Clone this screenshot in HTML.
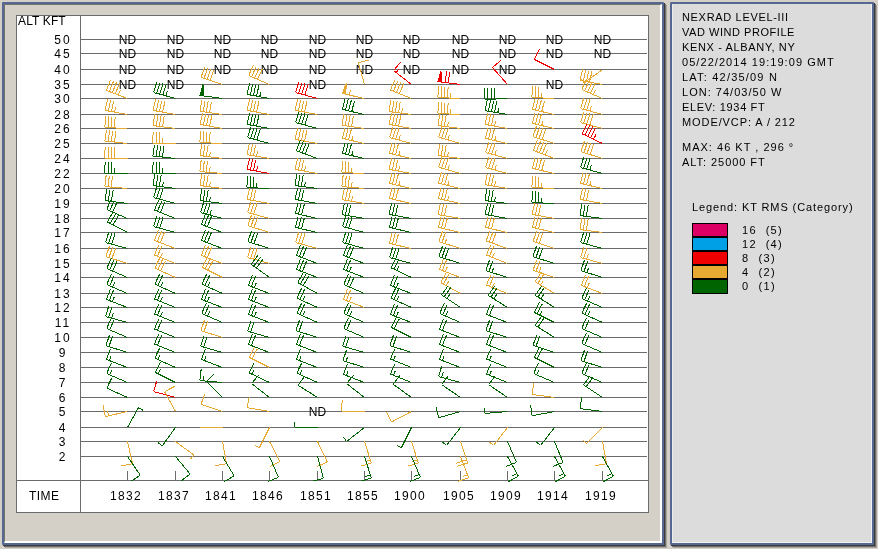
<!DOCTYPE html>
<html><head><meta charset="utf-8">
<style>
html,body{margin:0;padding:0;}
body{width:878px;height:549px;overflow:hidden;position:relative;background:#D4D0C8;font-family:"Liberation Sans",sans-serif;}
.yl,.tl,.nd,.alt,.time,.rt{will-change:transform;}
.abs{position:absolute;}
#lfsh{position:absolute;left:5px;top:5px;width:662px;height:543px;background:#A9A6A0;}
#lfsh2{position:absolute;left:4px;top:4px;width:662px;height:543px;background:#6E6C68;}
#lfsh3{position:absolute;left:3px;top:3px;width:662px;height:543px;background:#3C3C3C;}
#lf{position:absolute;left:2px;top:2px;width:662px;height:543px;box-sizing:border-box;border:2px solid #566792;background:#D4D0C8;border-radius:1px;}
#lfin{position:absolute;left:0;top:0;right:0;bottom:0;border-top:1px solid #727272;border-left:1px solid #727272;border-right:2px solid #fff;border-bottom:2px solid #fff;}
#rpsh{position:absolute;left:673px;top:5px;width:204px;height:543px;background:#A9A6A0;}
#rpsh2{position:absolute;left:672px;top:4px;width:204px;height:543px;background:#6E6C68;}
#rpsh3{position:absolute;left:671px;top:3px;width:204px;height:543px;background:#3C3C3C;}
#rp{position:absolute;left:670px;top:2px;width:204px;height:543px;box-sizing:border-box;border:2px solid #566792;background:#DCDCDC;border-radius:1px;}
#rpin{position:absolute;left:0;top:0;right:0;bottom:0;border-left:1px solid #ECECEC;border-right:1px solid #F2F2F2;border-bottom:1px solid #F2F2F2;}
#chart{position:absolute;left:16px;top:15px;width:633px;height:498px;box-sizing:border-box;border:1px solid #6B6B6B;background:#fff;}
svg{position:absolute;left:0;top:0;}
.yl{position:absolute;left:37px;width:50px;box-sizing:border-box;padding-left:2px;text-align:center;font-size:12px;line-height:14px;letter-spacing:2px;color:#000;}
.tl{position:absolute;top:489px;width:54px;text-align:center;font-size:12px;line-height:14px;letter-spacing:1.3px;color:#000;}
.nd{position:absolute;width:41px;text-align:center;font-size:12px;line-height:14px;color:#000;}
.alt{position:absolute;left:18px;top:14px;font-size:12px;line-height:14px;letter-spacing:0.13px;}
.time{position:absolute;left:29px;top:489px;font-size:12px;line-height:14px;letter-spacing:0.45px;}
.rt{position:absolute;left:682px;font-size:11px;line-height:15px;color:#000;white-space:pre;}
.sw{position:absolute;left:692px;width:36px;height:14px;box-sizing:border-box;border:1px solid #000;}
</style></head><body>
<div id="lfsh"></div><div id="lfsh2"></div><div id="lfsh3"></div>
<div id="lf"><div id="lfin"></div></div>
<div id="rpsh"></div><div id="rpsh2"></div><div id="rpsh3"></div>
<div id="rp"><div id="rpin"></div></div>
<div id="chart"></div>
<svg width="878" height="549" viewBox="0 0 878 549" shape-rendering="crispEdges">
<g fill="#6B6B6B">
<rect x="81" y="39" width="566" height="1"/>
<rect x="81" y="53" width="566" height="1"/>
<rect x="81" y="69" width="566" height="1"/>
<rect x="81" y="84" width="566" height="1"/>
<rect x="81" y="98" width="566" height="1"/>
<rect x="81" y="114" width="566" height="1"/>
<rect x="81" y="128" width="566" height="1"/>
<rect x="81" y="143" width="566" height="1"/>
<rect x="81" y="158" width="566" height="1"/>
<rect x="81" y="173" width="566" height="1"/>
<rect x="81" y="188" width="566" height="1"/>
<rect x="81" y="203" width="566" height="1"/>
<rect x="81" y="218" width="566" height="1"/>
<rect x="81" y="232" width="566" height="1"/>
<rect x="81" y="248" width="566" height="1"/>
<rect x="81" y="263" width="566" height="1"/>
<rect x="81" y="277" width="566" height="1"/>
<rect x="81" y="293" width="566" height="1"/>
<rect x="81" y="307" width="566" height="1"/>
<rect x="81" y="322" width="566" height="1"/>
<rect x="81" y="337" width="566" height="1"/>
<rect x="81" y="352" width="566" height="1"/>
<rect x="81" y="367" width="566" height="1"/>
<rect x="81" y="382" width="566" height="1"/>
<rect x="81" y="397" width="566" height="1"/>
<rect x="81" y="411" width="566" height="1"/>
<rect x="81" y="427" width="566" height="1"/>
<rect x="81" y="441" width="566" height="1"/>
<rect x="81" y="456" width="566" height="1"/>
<rect x="17" y="480" width="631" height="1"/>
<rect x="80" y="16" width="1" height="496"/>
<rect x="127" y="471" width="1" height="9"/>
<rect x="175" y="471" width="1" height="9"/>
<rect x="222" y="471" width="1" height="9"/>
<rect x="269" y="471" width="1" height="9"/>
<rect x="317" y="471" width="1" height="9"/>
<rect x="364" y="471" width="1" height="9"/>
<rect x="411" y="471" width="1" height="9"/>
<rect x="460" y="471" width="1" height="9"/>
<rect x="507" y="471" width="1" height="9"/>
<rect x="554" y="471" width="1" height="9"/>
<rect x="602" y="471" width="1" height="9"/>
</g>
</svg>
<div class="alt">ALT KFT</div>
<div class="yl" style="top:33px">50</div>
<div class="yl" style="top:47px">45</div>
<div class="yl" style="top:63px">40</div>
<div class="yl" style="top:78px">35</div>
<div class="yl" style="top:92px">30</div>
<div class="yl" style="top:108px">28</div>
<div class="yl" style="top:122px">26</div>
<div class="yl" style="top:137px">25</div>
<div class="yl" style="top:152px">24</div>
<div class="yl" style="top:167px">22</div>
<div class="yl" style="top:182px">20</div>
<div class="yl" style="top:197px">19</div>
<div class="yl" style="top:212px">18</div>
<div class="yl" style="top:226px">17</div>
<div class="yl" style="top:242px">16</div>
<div class="yl" style="top:257px">15</div>
<div class="yl" style="top:271px">14</div>
<div class="yl" style="top:287px">13</div>
<div class="yl" style="top:301px">12</div>
<div class="yl" style="top:316px">11</div>
<div class="yl" style="top:331px">10</div>
<div class="yl" style="top:346px">9</div>
<div class="yl" style="top:361px">8</div>
<div class="yl" style="top:376px">7</div>
<div class="yl" style="top:391px">6</div>
<div class="yl" style="top:405px">5</div>
<div class="yl" style="top:421px">4</div>
<div class="yl" style="top:435px">3</div>
<div class="yl" style="top:450px">2</div>
<div class="time">TIME</div>
<div class="tl" style="left:99px">1832</div>
<div class="tl" style="left:147px">1837</div>
<div class="tl" style="left:194px">1841</div>
<div class="tl" style="left:241px">1846</div>
<div class="tl" style="left:289px">1851</div>
<div class="tl" style="left:336px">1855</div>
<div class="tl" style="left:383px">1900</div>
<div class="tl" style="left:432px">1905</div>
<div class="tl" style="left:479px">1909</div>
<div class="tl" style="left:526px">1914</div>
<div class="tl" style="left:574px">1919</div>
<div class="nd" style="left:107px;top:33px">ND</div>
<div class="nd" style="left:107px;top:47px">ND</div>
<div class="nd" style="left:107px;top:63px">ND</div>
<div class="nd" style="left:107px;top:78px">ND</div>
<div class="nd" style="left:155px;top:33px">ND</div>
<div class="nd" style="left:155px;top:47px">ND</div>
<div class="nd" style="left:155px;top:63px">ND</div>
<div class="nd" style="left:155px;top:78px">ND</div>
<div class="nd" style="left:202px;top:33px">ND</div>
<div class="nd" style="left:202px;top:47px">ND</div>
<div class="nd" style="left:202px;top:63px">ND</div>
<div class="nd" style="left:249px;top:33px">ND</div>
<div class="nd" style="left:249px;top:47px">ND</div>
<div class="nd" style="left:249px;top:63px">ND</div>
<div class="nd" style="left:297px;top:33px">ND</div>
<div class="nd" style="left:297px;top:47px">ND</div>
<div class="nd" style="left:297px;top:63px">ND</div>
<div class="nd" style="left:297px;top:78px">ND</div>
<div class="nd" style="left:297px;top:405px">ND</div>
<div class="nd" style="left:344px;top:33px">ND</div>
<div class="nd" style="left:344px;top:47px">ND</div>
<div class="nd" style="left:344px;top:63px">ND</div>
<div class="nd" style="left:391px;top:33px">ND</div>
<div class="nd" style="left:391px;top:47px">ND</div>
<div class="nd" style="left:391px;top:63px">ND</div>
<div class="nd" style="left:440px;top:33px">ND</div>
<div class="nd" style="left:440px;top:47px">ND</div>
<div class="nd" style="left:440px;top:63px">ND</div>
<div class="nd" style="left:487px;top:33px">ND</div>
<div class="nd" style="left:487px;top:47px">ND</div>
<div class="nd" style="left:487px;top:63px">ND</div>
<div class="nd" style="left:534px;top:33px">ND</div>
<div class="nd" style="left:534px;top:47px">ND</div>
<div class="nd" style="left:534px;top:78px">ND</div>
<div class="nd" style="left:582px;top:33px">ND</div>
<div class="nd" style="left:582px;top:47px">ND</div>
<svg width="878" height="549" viewBox="0 0 878 549" shape-rendering="crispEdges" fill="none" stroke-width="1">
<path d="M127.50 98.50L106.29 90.42M106.29 90.42L110.55 80.06M109.28 91.56L113.54 81.20M112.27 92.70L116.54 82.34M115.26 93.84L119.53 83.48M118.25 94.98L120.24 90.17" stroke="#E6AA32"/>
<path d="M127.50 114.50L105.17 110.44M105.17 110.44L107.46 99.47M108.31 111.01L110.61 100.05M111.46 111.58L113.76 100.62M114.61 112.16L115.69 107.07" stroke="#E6AA32"/>
<path d="M127.50 128.50L104.82 127.51M104.82 127.51L105.61 116.34M108.02 127.65L108.80 116.48M111.22 127.79L112.00 116.62M114.41 127.93L115.20 116.75" stroke="#E6AA32"/>
<path d="M127.50 143.50L104.93 141.05M104.93 141.05L106.44 129.95M108.11 141.39L109.62 130.29M111.30 141.74L112.80 130.64M114.48 142.08L115.99 130.98" stroke="#E6AA32"/>
<path d="M127.50 158.50L104.80 158.50M104.80 158.50L105.10 147.30M108.00 158.50L108.30 147.30M111.20 158.50L111.50 147.30M114.40 158.50L114.70 147.30" stroke="#E6AA32"/>
<path d="M127.50 173.50L104.80 173.50M104.80 173.50L105.10 162.30M108.00 173.50L108.30 162.30M111.20 173.50L111.50 162.30M114.40 173.50L114.55 168.30" stroke="#006400"/>
<path d="M127.50 188.50L104.89 186.53M104.89 186.53L106.15 175.40M108.07 186.81L109.34 175.68M111.26 187.09L112.53 175.96" stroke="#E6AA32"/>
<path d="M127.50 203.50L104.99 200.56M104.99 200.56L106.74 189.50M108.16 200.98L109.91 189.91M111.34 201.39L113.08 190.32" stroke="#006400"/>
<path d="M127.50 218.50L106.64 209.56M106.64 209.56L111.32 199.38M109.58 210.82L114.26 200.64M112.52 212.08L117.21 201.90" stroke="#006400"/>
<path d="M127.50 232.50L107.41 221.93M107.41 221.93L112.89 212.16M110.24 223.42L115.73 213.65M113.08 224.91L118.56 215.14" stroke="#006400"/>
<path d="M127.50 248.50L105.60 242.53M105.60 242.53L108.84 231.80M108.69 243.37L111.92 232.64M111.77 244.21L115.01 233.48" stroke="#006400"/>
<path d="M127.50 263.50L105.87 256.62M105.87 256.62L109.55 246.04M108.92 257.59L112.60 247.01M111.97 258.56L115.65 247.98" stroke="#E6AA32"/>
<path d="M127.50 277.50L106.64 268.56M106.64 268.56L111.32 258.38M109.58 269.82L114.26 259.64M112.52 271.08L117.21 260.90" stroke="#006400"/>
<path d="M127.50 293.50L106.64 284.56M106.64 284.56L111.32 274.38M109.58 285.82L114.26 275.64M112.52 287.08L114.70 282.36" stroke="#006400"/>
<path d="M127.50 307.50L106.29 299.42M106.29 299.42L110.55 289.06M109.28 300.56L113.54 290.20M112.27 301.70L114.26 296.89" stroke="#006400"/>
<path d="M127.50 322.50L105.60 316.53M105.60 316.53L108.84 305.80M108.69 317.37L111.92 306.64M111.77 318.21L113.29 313.23" stroke="#006400"/>
<path d="M127.50 337.50L106.64 328.56M106.64 328.56L111.32 318.38M109.58 329.82L114.26 319.64" stroke="#006400"/>
<path d="M127.50 352.50L105.87 345.62M105.87 345.62L109.55 335.04M108.92 346.59L112.60 336.01" stroke="#006400"/>
<path d="M127.50 367.50L106.29 359.42M106.29 359.42L110.55 349.06M109.28 360.56L111.27 355.75" stroke="#006400"/>
<path d="M127.50 382.50L106.64 373.56M106.64 373.56L111.32 363.38M109.58 374.82L111.76 370.10" stroke="#006400"/>
<path d="M127.50 397.50L106.80 388.18M106.80 388.18L111.67 378.09" stroke="#006400"/>
<path d="M127.50 411.50L105.36 416.53M105.36 416.53L103.17 405.54M108.48 415.82L107.48 410.72" stroke="#E6AA32"/>
<path d="M127.50 427.50L138.44 407.61M138.44 407.61L142.92 410.25" stroke="#006400"/>
<path d="M127.50 441.50L132.53 463.64M132.53 463.64L121.54 465.83" stroke="#E6AA32"/>
<path d="M127.50 456.50L140.32 475.23M140.32 475.23L130.91 481.31" stroke="#006400"/>
<path d="M175.50 98.50L153.60 92.53M153.60 92.53L156.84 81.80M156.69 93.37L159.92 82.64M159.77 94.21L163.01 83.48M162.86 95.05L166.10 84.33M165.95 95.90L167.46 90.92" stroke="#006400"/>
<path d="M175.50 114.50L153.17 110.44M153.17 110.44L155.46 99.47M156.31 111.01L158.61 100.05M159.46 111.58L161.76 100.62M162.61 112.16L164.91 101.19" stroke="#E6AA32"/>
<path d="M175.50 128.50L152.99 125.56M152.99 125.56L154.74 114.50M156.16 125.98L157.91 114.91M159.34 126.39L161.08 115.32M162.51 126.81L164.26 115.74" stroke="#E6AA32"/>
<path d="M175.50 143.50L152.80 143.50M152.80 143.50L153.10 132.30M156.00 143.50L156.30 132.30M159.20 143.50L159.50 132.30M162.40 143.50L162.55 138.30" stroke="#E6AA32"/>
<path d="M175.50 158.50L152.93 156.05M152.93 156.05L154.44 144.95M156.11 156.39L157.62 145.29M159.30 156.74L160.80 145.64M162.48 157.08L163.99 145.98" stroke="#006400"/>
<path d="M175.50 173.50L152.80 173.50M152.80 173.50L153.10 162.30M156.00 173.50L156.30 162.30M159.20 173.50L159.50 162.30M162.40 173.50L162.55 168.30" stroke="#006400"/>
<path d="M175.50 188.50L152.99 185.56M152.99 185.56L154.74 174.50M156.16 185.98L157.91 174.91M159.34 186.39L161.08 175.32M162.51 186.81L163.33 181.67" stroke="#006400"/>
<path d="M175.50 203.50L153.60 197.53M153.60 197.53L156.84 186.80M156.69 198.37L159.92 187.64M159.77 199.21L163.01 188.48" stroke="#006400"/>
<path d="M175.50 218.50L154.42 210.07M154.42 210.07L158.86 199.78M157.39 211.26L161.83 200.97M160.37 212.45L164.80 202.16" stroke="#006400"/>
<path d="M175.50 232.50L153.60 226.53M153.60 226.53L156.84 215.80M156.69 227.37L159.92 216.64M159.77 228.21L163.01 217.48" stroke="#006400"/>
<path d="M175.50 248.50L154.29 240.42M154.29 240.42L158.55 230.06M157.28 241.56L161.54 231.20M160.27 242.70L164.54 232.34" stroke="#E6AA32"/>
<path d="M175.50 263.50L154.42 255.07M154.42 255.07L158.86 244.78M157.39 256.26L161.83 245.97M160.37 257.45L162.44 252.67" stroke="#E6AA32"/>
<path d="M175.50 277.50L154.80 268.18M154.80 268.18L159.67 258.09M157.72 269.50L162.59 259.41M160.64 270.81L165.51 260.72" stroke="#E6AA32"/>
<path d="M175.50 293.50L154.80 284.18M154.80 284.18L159.67 274.09M157.72 285.50L162.59 275.41M160.64 286.81L162.91 282.13" stroke="#006400"/>
<path d="M175.50 307.50L154.42 299.07M154.42 299.07L158.86 288.78M157.39 300.26L161.83 289.97M160.37 301.45L162.44 296.67" stroke="#006400"/>
<path d="M175.50 322.50L154.42 314.07M154.42 314.07L158.86 303.78M157.39 315.26L161.83 304.97M160.37 316.45L162.44 311.67" stroke="#006400"/>
<path d="M175.50 337.50L154.42 329.07M154.42 329.07L158.86 318.78M157.39 330.26L161.83 319.97" stroke="#006400"/>
<path d="M175.50 352.50L154.42 344.07M154.42 344.07L158.86 333.78M157.39 345.26L161.83 334.97" stroke="#006400"/>
<path d="M175.50 367.50L154.80 358.18M154.80 358.18L159.67 348.09M157.72 359.50L159.99 354.82" stroke="#006400"/>
<path d="M175.50 382.50L155.20 372.35M155.20 372.35L160.47 362.46M158.06 373.78L160.52 369.20" stroke="#006400"/>
<path d="M175.50 397.50L153.60 391.53M153.60 391.53L156.84 380.80" stroke="#F00000"/>
<path d="M175.50 411.50L164.56 391.61M164.56 391.61L174.52 386.48" stroke="#E6AA32"/>
<path d="M175.50 427.50L162.21 445.90M162.21 445.90L158.08 442.74" stroke="#006400"/>
<path d="M175.50 441.50L193.77 454.97M193.77 454.97L190.57 459.06" stroke="#E6AA32"/>
<path d="M175.50 456.50L190.03 473.94M190.03 473.94L181.24 480.88" stroke="#006400"/>
<path d="M222.50 84.50L200.96 77.32M200.96 77.32L204.79 66.79M204.00 78.33L207.83 67.80M207.04 79.35L210.86 68.82M210.07 80.36L213.90 69.83" stroke="#E6AA32"/>
<path d="M222.50 98.50L200.01 95.43" stroke="#006400"/><polygon points="200.01,95.43 203.01,84.54 203.48,95.91" fill="#006400" stroke="#006400"/>
<path d="M222.50 114.50L200.03 111.29M200.03 111.29L201.91 100.24M203.20 111.74L205.08 100.70M206.36 112.19L208.24 101.15M209.53 112.65L211.41 101.60" stroke="#E6AA32"/>
<path d="M222.50 128.50L200.17 124.44M200.17 124.44L202.46 113.47M203.31 125.01L205.61 114.05M206.46 125.58L208.76 114.62M209.61 126.16L211.91 115.19" stroke="#E6AA32"/>
<path d="M222.50 143.50L199.82 142.51M199.82 142.51L200.61 131.34M203.02 142.65L203.80 131.48M206.22 142.79L207.00 131.62M209.41 142.93L210.20 131.75" stroke="#E6AA32"/>
<path d="M222.50 158.50L199.99 155.56M199.99 155.56L201.74 144.50M203.16 155.98L204.91 144.91M206.34 156.39L208.08 145.32M209.51 156.81L210.33 151.67" stroke="#E6AA32"/>
<path d="M222.50 173.50L199.89 171.53M199.89 171.53L201.15 160.40M203.07 171.81L204.34 160.68M206.26 172.09L207.53 160.96M209.45 172.37L210.05 167.20" stroke="#E6AA32"/>
<path d="M222.50 188.50L199.99 185.56M199.99 185.56L201.74 174.50M203.16 185.98L204.91 174.91M206.34 186.39L208.08 175.32M209.51 186.81L210.33 181.67" stroke="#E6AA32"/>
<path d="M222.50 203.50L199.99 200.56M199.99 200.56L201.74 189.50M203.16 200.98L204.91 189.91M206.34 201.39L208.08 190.32M209.51 201.81L210.33 196.67" stroke="#006400"/>
<path d="M222.50 218.50L200.60 212.53M200.60 212.53L203.84 201.80M203.69 213.37L206.92 202.64M206.77 214.21L210.01 203.48M209.86 215.05L211.37 210.08" stroke="#006400"/>
<path d="M222.50 232.50L201.29 224.42M201.29 224.42L205.55 214.06M204.28 225.56L208.54 215.20M207.27 226.70L211.54 216.34" stroke="#006400"/>
<path d="M222.50 248.50L201.29 240.42M201.29 240.42L205.55 230.06M204.28 241.56L208.54 231.20M207.27 242.70L211.54 232.34" stroke="#006400"/>
<path d="M222.50 263.50L201.29 255.42M201.29 255.42L205.55 245.06M204.28 256.56L208.54 246.20M207.27 257.70L211.54 247.34" stroke="#E6AA32"/>
<path d="M222.50 277.50L202.20 267.35M202.20 267.35L207.47 257.46M205.06 268.78L210.34 258.90M207.92 270.21L213.20 260.33" stroke="#E6AA32"/>
<path d="M222.50 293.50L201.80 284.18M201.80 284.18L206.67 274.09M204.72 285.50L209.59 275.41M207.64 286.81L209.91 282.13" stroke="#006400"/>
<path d="M222.50 307.50L201.29 299.42M201.29 299.42L205.55 289.06M204.28 300.56L208.54 290.20M207.27 301.70L209.26 296.89" stroke="#006400"/>
<path d="M222.50 322.50L201.64 313.56M201.64 313.56L206.32 303.38M204.58 314.82L209.26 304.64M207.52 316.08L209.70 311.36" stroke="#006400"/>
<path d="M222.50 337.50L200.87 330.62M200.87 330.62L204.55 320.04M203.92 331.59L207.60 321.01" stroke="#E6AA32"/>
<path d="M222.50 352.50L200.67 346.26M200.67 346.26L204.04 335.58M203.75 347.14L207.12 336.46" stroke="#006400"/>
<path d="M222.50 367.50L201.29 359.42M201.29 359.42L205.55 349.06M204.28 360.56L206.27 355.75" stroke="#006400"/>
<path d="M222.50 382.50L199.89 380.53M199.89 380.53L201.15 369.40M203.07 380.81L203.67 375.64" stroke="#006400"/>
<path d="M222.50 397.50L206.45 381.45M206.45 381.45L214.58 373.74" stroke="#006400"/>
<path d="M222.50 411.50L200.96 404.32M200.96 404.32L204.79 393.79" stroke="#E6AA32"/>
<path d="M222.50 427.50L199.80 427.50" stroke="#E6AA32"/>
<path d="M222.50 441.50L226.56 463.83M226.56 463.83L215.49 465.54" stroke="#E6AA32"/>
<path d="M222.50 456.50L234.18 475.97M234.18 475.97L224.42 481.47" stroke="#006400"/>
<path d="M269.50 84.50L248.64 75.56M248.64 75.56L253.32 65.38M251.58 76.82L256.26 66.64M254.52 78.08L259.21 67.90M257.46 79.34L262.15 69.16" stroke="#E6AA32"/>
<path d="M269.50 98.50L247.17 94.44M247.17 94.44L249.46 83.47M250.31 95.01L252.61 84.05M253.46 95.58L255.76 84.62M256.61 96.16L258.91 85.19M259.76 96.73L260.84 91.64" stroke="#006400"/>
<path d="M269.50 114.50L247.17 110.44M247.17 110.44L249.46 99.47M250.31 111.01L252.61 100.05M253.46 111.58L255.76 100.62M256.61 112.16L258.91 101.19" stroke="#E6AA32"/>
<path d="M269.50 128.50L247.17 124.44M247.17 124.44L249.46 113.47M250.31 125.01L252.61 114.05M253.46 125.58L255.76 114.62M256.61 126.16L258.91 115.19" stroke="#006400"/>
<path d="M269.50 143.50L247.60 137.53M247.60 137.53L250.84 126.80M250.69 138.37L253.92 127.64M253.77 139.21L257.01 128.48M256.86 140.05L260.10 129.33" stroke="#006400"/>
<path d="M269.50 158.50L247.14 154.61M247.14 154.61L249.35 143.63M250.29 155.16L252.50 144.18M253.44 155.71L255.66 144.72M256.59 156.26L257.63 151.16" stroke="#E6AA32"/>
<path d="M269.50 173.50L247.17 169.44M247.17 169.44L249.46 158.47M250.31 170.01L252.61 159.05M253.46 170.58L255.76 159.62M256.61 171.16L257.69 166.07" stroke="#F00000"/>
<path d="M269.50 188.50L246.82 187.51M246.82 187.51L247.61 176.34M250.02 187.65L250.80 176.48M253.22 187.79L254.00 176.62M256.41 187.93L256.79 182.74" stroke="#006400"/>
<path d="M269.50 203.50L247.17 199.44M247.17 199.44L249.46 188.47M250.31 200.01L252.61 189.05M253.46 200.58L255.76 189.62" stroke="#E6AA32"/>
<path d="M269.50 218.50L247.60 212.53M247.60 212.53L250.84 201.80M250.69 213.37L253.92 202.64M253.77 214.21L257.01 203.48" stroke="#E6AA32"/>
<path d="M269.50 232.50L247.87 225.62M247.87 225.62L251.55 215.04M250.92 226.59L254.60 216.01M253.97 227.56L257.65 216.98" stroke="#E6AA32"/>
<path d="M269.50 248.50L247.87 241.62M247.87 241.62L251.55 231.04M250.92 242.59L254.60 232.01M253.97 243.56L257.65 232.98" stroke="#006400"/>
<path d="M269.50 263.50L247.60 257.53M247.60 257.53L250.84 246.80M250.69 258.37L253.92 247.64M253.77 259.21L257.01 248.48" stroke="#E6AA32"/>
<path d="M269.50 277.50L251.10 264.21M251.10 264.21L257.90 255.31M253.69 266.08L260.49 257.18M256.29 267.96L263.09 259.05" stroke="#006400"/>
<path d="M269.50 293.50L248.29 285.42M248.29 285.42L252.55 275.06M251.28 286.56L255.54 276.20M254.27 287.70L256.26 282.89" stroke="#006400"/>
<path d="M269.50 307.50L248.29 299.42M248.29 299.42L252.55 289.06M251.28 300.56L255.54 290.20M254.27 301.70L256.26 296.89" stroke="#006400"/>
<path d="M269.50 322.50L248.29 314.42M248.29 314.42L252.55 304.06M251.28 315.56L255.54 305.20M254.27 316.70L256.26 311.89" stroke="#006400"/>
<path d="M269.50 337.50L247.67 331.26M247.67 331.26L251.04 320.58M250.75 332.14L254.12 321.46" stroke="#006400"/>
<path d="M269.50 352.50L248.29 344.42M248.29 344.42L252.55 334.06M251.28 345.56L255.54 335.20" stroke="#006400"/>
<path d="M269.50 367.50L249.20 357.35M249.20 357.35L254.47 347.46M252.06 358.78L257.34 348.90" stroke="#E6AA32"/>
<path d="M269.50 382.50L248.99 372.78M248.99 372.78L254.05 362.79M251.88 374.15L254.24 369.52" stroke="#006400"/>
<path d="M269.50 397.50L251.58 383.56M251.58 383.56L258.69 374.91" stroke="#006400"/>
<path d="M269.50 411.50L247.14 407.61M247.14 407.61L249.35 396.63" stroke="#E6AA32"/>
<path d="M269.50 427.50L259.35 447.80M259.35 447.80L254.76 445.34" stroke="#E6AA32"/>
<path d="M269.50 441.50L280.03 461.61M280.03 461.61L269.97 466.54" stroke="#E6AA32"/>
<path d="M269.50 456.50L278.44 477.36M278.44 477.36L268.03 481.50" stroke="#006400"/>
<path d="M317.50 98.50L295.60 92.53M295.60 92.53L298.84 81.80M298.69 93.37L301.92 82.64M301.77 94.21L305.01 83.48M304.86 95.05L308.10 84.33" stroke="#F00000"/>
<path d="M317.50 114.50L295.17 110.44M295.17 110.44L297.46 99.47M298.31 111.01L300.61 100.05M301.46 111.58L303.76 100.62M304.61 112.16L306.91 101.19" stroke="#E6AA32"/>
<path d="M317.50 128.50L295.60 122.53M295.60 122.53L298.84 111.80M298.69 123.37L301.92 112.64M301.77 124.21L305.01 113.48M304.86 125.05L308.10 114.33" stroke="#006400"/>
<path d="M317.50 143.50L295.17 139.44M295.17 139.44L297.46 128.47M298.31 140.01L300.61 129.05M301.46 140.58L303.76 129.62M304.61 141.16L306.91 130.19" stroke="#E6AA32"/>
<path d="M317.50 158.50L296.17 150.74M296.17 150.74L300.28 140.32M299.17 151.84L303.28 141.41M302.18 152.93L306.29 142.51M305.19 154.02L309.30 143.60" stroke="#006400"/>
<path d="M317.50 173.50L295.17 169.44M295.17 169.44L297.46 158.47M298.31 170.01L300.61 159.05M301.46 170.58L303.76 159.62M304.61 171.16L305.69 166.07" stroke="#E6AA32"/>
<path d="M317.50 188.50L294.99 185.56M294.99 185.56L296.74 174.50M298.16 185.98L299.91 174.91M301.34 186.39L303.08 175.32M304.51 186.81L305.33 181.67" stroke="#006400"/>
<path d="M317.50 203.50L295.17 199.44M295.17 199.44L297.46 188.47M298.31 200.01L300.61 189.05M301.46 200.58L303.76 189.62" stroke="#006400"/>
<path d="M317.50 218.50L295.36 213.47M295.36 213.47L298.14 202.61M298.48 214.18L301.26 203.32M301.61 214.89L304.38 204.03" stroke="#006400"/>
<path d="M317.50 232.50L295.36 227.47M295.36 227.47L298.14 216.61M298.48 228.18L301.26 217.32M301.61 228.89L304.38 218.03" stroke="#006400"/>
<path d="M317.50 248.50L295.60 242.53M295.60 242.53L298.84 231.80M298.69 243.37L301.92 232.64M301.77 244.21L305.01 233.48" stroke="#E6AA32"/>
<path d="M317.50 263.50L296.29 255.42M296.29 255.42L300.55 245.06M299.28 256.56L303.54 246.20M302.27 257.70L306.54 247.34" stroke="#006400"/>
<path d="M317.50 277.50L296.29 269.42M296.29 269.42L300.55 259.06M299.28 270.56L303.54 260.20M302.27 271.70L306.54 261.34" stroke="#006400"/>
<path d="M317.50 293.50L297.61 282.56M297.61 282.56L303.27 272.89M300.41 284.10L306.07 274.43M303.22 285.64L308.88 275.98" stroke="#006400"/>
<path d="M317.50 307.50L296.80 298.18M296.80 298.18L301.67 288.09M299.72 299.50L304.59 289.41M302.64 300.81L304.91 296.13" stroke="#006400"/>
<path d="M317.50 322.50L296.80 313.18M296.80 313.18L301.67 303.09M299.72 314.50L304.59 304.41M302.64 315.81L304.91 311.13" stroke="#006400"/>
<path d="M317.50 337.50L295.87 330.62M295.87 330.62L299.55 320.04M298.92 331.59L302.60 321.01" stroke="#006400"/>
<path d="M317.50 352.50L296.29 344.42M296.29 344.42L300.55 334.06M299.28 345.56L303.54 335.20" stroke="#006400"/>
<path d="M317.50 367.50L296.29 359.42M296.29 359.42L300.55 349.06M299.28 360.56L301.27 355.75" stroke="#006400"/>
<path d="M317.50 382.50L296.80 373.18M296.80 373.18L301.67 363.09M299.72 374.50L301.99 369.82" stroke="#006400"/>
<path d="M317.50 397.50L298.31 385.38M298.31 385.38L304.54 376.07" stroke="#006400"/>
<path d="M317.50 427.50L294.80 427.50M294.80 427.50L294.95 422.30" stroke="#006400"/>
<path d="M317.50 441.50L327.26 461.99M327.26 461.99L317.02 466.54" stroke="#E6AA32"/>
<path d="M317.50 456.50L323.47 478.40M323.47 478.40L312.59 481.06" stroke="#006400"/>
<path d="M364.50 84.50L358.26 62.67M358.26 62.67L369.12 59.88" stroke="#E6AA32"/>
<path d="M364.50 98.50L342.36 93.47M349.19 95.02L350.49 89.98" stroke="#E6AA32"/><polygon points="342.36,93.47 346.31,82.88 345.78,94.24" fill="#E6AA32" stroke="#E6AA32"/>
<path d="M364.50 114.50L342.36 109.47M342.36 109.47L345.14 98.61M345.48 110.18L348.26 99.32M348.61 110.89L351.38 100.03M351.73 111.60L354.50 100.74" stroke="#006400"/>
<path d="M364.50 128.50L342.03 125.29M342.03 125.29L343.91 114.24M345.20 125.74L347.08 114.70M348.36 126.19L350.24 115.15M351.53 126.65L353.41 115.60" stroke="#E6AA32"/>
<path d="M364.50 143.50L342.36 138.47M342.36 138.47L345.14 127.61M345.48 139.18L348.26 128.32M348.61 139.89L351.38 129.03M351.73 140.60L353.02 135.56" stroke="#E6AA32"/>
<path d="M364.50 158.50L342.36 153.47M342.36 153.47L345.14 142.61M345.48 154.18L348.26 143.32M348.61 154.89L351.38 144.03M351.73 155.60L353.02 150.56" stroke="#006400"/>
<path d="M364.50 173.50L341.82 172.51M341.82 172.51L342.61 161.34M345.02 172.65L345.80 161.48M348.22 172.79L349.00 161.62M351.41 172.93L351.79 167.74" stroke="#E6AA32"/>
<path d="M364.50 188.50L341.89 186.53M341.89 186.53L343.15 175.40M345.07 186.81L346.34 175.68M348.26 187.09L349.53 175.96M351.45 187.37L352.05 182.20" stroke="#E6AA32"/>
<path d="M364.50 203.50L342.14 199.61M342.14 199.61L344.35 188.63M345.29 200.16L347.50 189.18M348.44 200.71L350.66 189.72M351.59 201.26L352.63 196.16" stroke="#E6AA32"/>
<path d="M364.50 218.50L342.14 214.61M342.14 214.61L344.35 203.63M345.29 215.16L347.50 204.18M348.44 215.71L350.66 204.72" stroke="#006400"/>
<path d="M364.50 232.50L342.60 226.53M342.60 226.53L345.84 215.80M345.69 227.37L348.92 216.64M348.77 228.21L352.01 217.48" stroke="#006400"/>
<path d="M364.50 248.50L342.60 242.53M342.60 242.53L345.84 231.80M345.69 243.37L348.92 232.64M348.77 244.21L352.01 233.48" stroke="#006400"/>
<path d="M364.50 263.50L343.29 255.42M343.29 255.42L347.55 245.06M346.28 256.56L350.54 246.20M349.27 257.70L353.54 247.34" stroke="#006400"/>
<path d="M364.50 277.50L343.29 269.42M343.29 269.42L347.55 259.06M346.28 270.56L350.54 260.20M349.27 271.70L351.26 266.89" stroke="#006400"/>
<path d="M364.50 293.50L343.64 284.56M343.64 284.56L348.32 274.38M346.58 285.82L351.26 275.64M349.52 287.08L354.21 276.90" stroke="#006400"/>
<path d="M364.50 307.50L343.29 299.42M343.29 299.42L347.55 289.06M346.28 300.56L350.54 290.20M349.27 301.70L351.26 296.89" stroke="#E6AA32"/>
<path d="M364.50 322.50L343.64 313.56M343.64 313.56L348.32 303.38M346.58 314.82L351.26 304.64M349.52 316.08L351.70 311.36" stroke="#006400"/>
<path d="M364.50 337.50L343.64 328.56M343.64 328.56L348.32 318.38M346.58 329.82L351.26 319.64" stroke="#006400"/>
<path d="M364.50 352.50L342.67 346.26M342.67 346.26L346.04 335.58M345.75 347.14L349.12 336.46" stroke="#006400"/>
<path d="M364.50 367.50L342.87 360.62M342.87 360.62L346.55 350.04M345.92 361.59L347.64 356.68" stroke="#006400"/>
<path d="M364.50 382.50L343.29 374.42M343.29 374.42L347.55 364.06M346.28 375.56L348.27 370.75" stroke="#006400"/>
<path d="M364.50 397.50L346.58 383.56M346.58 383.56L353.69 374.91" stroke="#006400"/>
<path d="M364.50 411.50L341.80 411.50M341.80 411.50L342.10 400.30" stroke="#E6AA32"/>
<path d="M364.50 427.50L346.58 441.44M346.58 441.44L343.51 437.24" stroke="#006400"/>
<path d="M364.50 441.50L371.38 463.13M371.38 463.13L360.62 466.24M370.41 460.08L365.41 461.52" stroke="#E6AA32"/>
<path d="M364.50 456.50L371.38 478.13M371.38 478.13L360.62 481.24M370.41 475.08L365.41 476.52" stroke="#006400"/>
<path d="M411.50 84.50L393.58 70.56M393.58 70.56L400.69 61.91M396.11 72.53L399.42 68.52" stroke="#F00000"/>
<path d="M411.50 98.50L390.42 90.07M390.42 90.07L394.86 79.78M393.39 91.26L397.83 80.97M396.37 92.45L400.80 82.16M399.34 93.63L403.78 83.35" stroke="#E6AA32"/>
<path d="M411.50 114.50L388.99 111.56M388.99 111.56L390.74 100.50M392.16 111.98L393.91 100.91M395.34 112.39L397.08 101.32M398.51 112.81L400.26 101.74M401.68 113.22L402.50 108.08" stroke="#E6AA32"/>
<path d="M411.50 128.50L389.17 124.44M389.17 124.44L391.46 113.47M392.31 125.01L394.61 114.05M395.46 125.58L397.76 114.62M398.61 126.16L400.91 115.19" stroke="#E6AA32"/>
<path d="M411.50 143.50L389.60 137.53M389.60 137.53L392.84 126.80M392.69 138.37L395.92 127.64M395.77 139.21L399.01 128.48M398.86 140.05L400.37 135.08" stroke="#E6AA32"/>
<path d="M411.50 158.50L389.36 153.47M389.36 153.47L392.14 142.61M392.48 154.18L395.26 143.32M395.61 154.89L398.38 144.03M398.73 155.60L400.02 150.56" stroke="#E6AA32"/>
<path d="M411.50 173.50L389.17 169.44M389.17 169.44L391.46 158.47M392.31 170.01L394.61 159.05M395.46 170.58L397.76 159.62M398.61 171.16L399.69 166.07" stroke="#E6AA32"/>
<path d="M411.50 188.50L389.36 183.47M389.36 183.47L392.14 172.61M392.48 184.18L395.26 173.32M395.61 184.89L398.38 174.03M398.73 185.60L400.02 180.56" stroke="#E6AA32"/>
<path d="M411.50 203.50L389.36 198.47M389.36 198.47L392.14 187.61M392.48 199.18L395.26 188.32M395.61 199.89L398.38 189.03" stroke="#E6AA32"/>
<path d="M411.50 218.50L389.17 214.44M389.17 214.44L391.46 203.47M392.31 215.01L394.61 204.05M395.46 215.58L397.76 204.62" stroke="#006400"/>
<path d="M411.50 232.50L389.36 227.47M389.36 227.47L392.14 216.61M392.48 228.18L395.26 217.32M395.61 228.89L398.38 218.03" stroke="#006400"/>
<path d="M411.50 248.50L389.36 243.47M389.36 243.47L392.14 232.61M392.48 244.18L395.26 233.32M395.61 244.89L398.38 234.03" stroke="#E6AA32"/>
<path d="M411.50 263.50L389.60 257.53M389.60 257.53L392.84 246.80M392.69 258.37L395.92 247.64M395.77 259.21L399.01 248.48" stroke="#006400"/>
<path d="M411.50 277.50L391.01 267.74M391.01 267.74L396.09 257.76M393.89 269.12L398.98 259.13M396.78 270.49L399.15 265.86" stroke="#006400"/>
<path d="M411.50 293.50L390.29 285.42M390.29 285.42L394.55 275.06M393.28 286.56L397.54 276.20M396.27 287.70L398.26 282.89" stroke="#006400"/>
<path d="M411.50 307.50L390.80 298.18M390.80 298.18L395.67 288.09M393.72 299.50L398.59 289.41M396.64 300.81L398.91 296.13" stroke="#006400"/>
<path d="M411.50 322.50L390.29 314.42M390.29 314.42L394.55 304.06M393.28 315.56L397.54 305.20M396.27 316.70L398.26 311.89" stroke="#006400"/>
<path d="M411.50 337.50L391.20 327.35M391.20 327.35L396.47 317.46M394.06 328.78L399.34 318.90" stroke="#006400"/>
<path d="M411.50 352.50L389.87 345.62M389.87 345.62L393.55 335.04M392.92 346.59L396.60 336.01" stroke="#006400"/>
<path d="M411.50 367.50L390.42 359.07M390.42 359.07L394.86 348.78M393.39 360.26L395.47 355.49" stroke="#006400"/>
<path d="M411.50 382.50L390.42 374.07M390.42 374.07L394.86 363.78M393.39 375.26L395.47 370.49" stroke="#006400"/>
<path d="M411.50 397.50L393.10 384.21M393.10 384.21L399.90 375.31" stroke="#006400"/>
<path d="M411.50 411.50L391.41 422.07M391.41 422.07L386.46 412.02" stroke="#E6AA32"/>
<path d="M411.50 427.50L401.35 447.80M401.35 447.80L396.76 445.34" stroke="#006400"/>
<path d="M411.50 441.50L418.38 463.13M418.38 463.13L407.62 466.24M417.41 460.08L412.41 461.52" stroke="#E6AA32"/>
<path d="M411.50 456.50L420.44 477.36M420.44 477.36L410.03 481.50M419.18 474.42L414.34 476.33" stroke="#006400"/>
<path d="M460.50 84.50L437.99 81.56M444.93 82.47L446.68 71.40M448.10 82.88L449.85 71.82" stroke="#F00000"/><polygon points="437.99,81.56 440.93,70.65 441.46,82.02" fill="#F00000" stroke="#F00000"/>
<path d="M460.50 98.50L437.82 97.51M437.82 97.51L438.61 86.34M441.02 97.65L441.80 86.48M444.22 97.79L445.00 86.62M447.41 97.93L448.20 86.75M450.61 98.07L450.99 92.88" stroke="#E6AA32"/>
<path d="M460.50 114.50L437.82 113.51M437.82 113.51L438.61 102.34M441.02 113.65L441.80 102.48M444.22 113.79L445.00 102.62M447.41 113.93L448.20 102.75M450.61 114.07L450.99 108.88" stroke="#E6AA32"/>
<path d="M460.50 128.50L437.99 125.56M437.99 125.56L439.74 114.50M441.16 125.98L442.91 114.91M444.34 126.39L446.08 115.32M447.51 126.81L448.33 121.67" stroke="#E6AA32"/>
<path d="M460.50 143.50L438.67 137.26M438.67 137.26L442.04 126.58M441.75 138.14L445.12 127.46M444.83 139.02L448.19 128.34M447.90 139.90L449.48 134.94" stroke="#E6AA32"/>
<path d="M460.50 158.50L437.99 155.56M437.99 155.56L439.74 144.50M441.16 155.98L442.91 144.91M444.34 156.39L446.08 145.32M447.51 156.81L448.33 151.67" stroke="#E6AA32"/>
<path d="M460.50 173.50L438.67 167.26M438.67 167.26L442.04 156.58M441.75 168.14L445.12 157.46M444.83 169.02L448.19 158.34M447.90 169.90L449.48 164.94" stroke="#E6AA32"/>
<path d="M460.50 188.50L438.42 183.24M438.42 183.24L441.30 172.42M441.53 183.98L444.42 173.16M444.64 184.72L447.53 173.90M447.76 185.47L449.11 180.44" stroke="#E6AA32"/>
<path d="M460.50 203.50L438.32 198.68M438.32 198.68L440.99 187.80M441.45 199.36L444.12 188.48M444.57 200.04L447.24 189.16M447.70 200.72L448.95 195.67" stroke="#E6AA32"/>
<path d="M460.50 218.50L438.14 214.61M438.14 214.61L440.35 203.63M441.29 215.16L443.50 204.18M444.44 215.71L446.66 204.72" stroke="#E6AA32"/>
<path d="M460.50 232.50L438.36 227.47M438.36 227.47L441.14 216.61M441.48 228.18L444.26 217.32M444.61 228.89L447.38 218.03" stroke="#E6AA32"/>
<path d="M460.50 248.50L438.87 241.62M438.87 241.62L442.55 231.04M441.92 242.59L445.60 232.01M444.97 243.56L446.69 238.65" stroke="#E6AA32"/>
<path d="M460.50 263.50L438.87 256.62M438.87 256.62L442.55 246.04M441.92 257.59L445.60 247.01M444.97 258.56L448.65 247.98" stroke="#006400"/>
<path d="M460.50 277.50L439.29 269.42M439.29 269.42L443.55 259.06M442.28 270.56L446.54 260.20M445.27 271.70L447.26 266.89" stroke="#E6AA32"/>
<path d="M460.50 293.50L440.61 282.56M440.61 282.56L446.27 272.89M443.41 284.10L449.07 274.43M446.22 285.64L448.86 281.16" stroke="#E6AA32"/>
<path d="M460.50 307.50L441.61 294.91M441.61 294.91L448.07 285.76M444.28 296.68L450.74 287.53M446.94 298.46L449.95 294.21" stroke="#006400"/>
<path d="M460.50 322.50L439.64 313.56M439.64 313.56L444.32 303.38M442.58 314.82L447.26 304.64M445.52 316.08L447.70 311.36" stroke="#006400"/>
<path d="M460.50 337.50L439.29 329.42M439.29 329.42L443.55 319.06M442.28 330.56L446.54 320.20" stroke="#006400"/>
<path d="M460.50 352.50L439.29 344.42M439.29 344.42L443.55 334.06M442.28 345.56L446.54 335.20" stroke="#006400"/>
<path d="M460.50 367.50L439.29 359.42M439.29 359.42L443.55 349.06M442.28 360.56L444.27 355.75" stroke="#006400"/>
<path d="M460.50 382.50L438.60 376.53M438.60 376.53L441.84 365.80M441.69 377.37L443.20 372.39" stroke="#006400"/>
<path d="M460.50 397.50L441.77 384.68M441.77 384.68L448.34 375.61" stroke="#006400"/>
<path d="M460.50 411.50L438.67 417.74M438.67 417.74L435.88 406.88" stroke="#006400"/>
<path d="M460.50 427.50L446.56 445.42M446.56 445.42L442.55 442.11" stroke="#006400"/>
<path d="M460.50 441.50L467.68 463.04M467.68 463.04L456.96 466.29M466.67 460.00L455.95 463.26" stroke="#E6AA32"/>
<path d="M460.50 456.50L468.58 477.71M468.58 477.71L458.01 481.42M467.44 474.72L462.53 476.43" stroke="#E6AA32"/>
<path d="M507.50 84.50L492.48 67.48M492.48 67.48L501.08 60.29" stroke="#F00000"/>
<path d="M507.50 98.50L484.82 99.49M484.82 99.49L484.63 88.28M488.02 99.35L487.83 88.14M491.22 99.21L491.03 88.01M494.41 99.07L494.23 87.87" stroke="#006400"/>
<path d="M507.50 114.50L485.14 110.61M485.14 110.61L487.35 99.63M488.29 111.16L490.50 100.18M491.44 111.71L493.66 100.72M494.59 112.26L496.81 101.27M497.75 112.80L498.79 107.71" stroke="#006400"/>
<path d="M507.50 128.50L485.17 124.44M485.17 124.44L487.46 113.47M488.31 125.01L490.61 114.05M491.46 125.58L493.76 114.62M494.61 126.16L495.69 121.07" stroke="#E6AA32"/>
<path d="M507.50 143.50L485.36 138.47M485.36 138.47L488.14 127.61M488.48 139.18L491.26 128.32M491.61 139.89L494.38 129.03M494.73 140.60L496.02 135.56" stroke="#E6AA32"/>
<path d="M507.50 158.50L485.60 152.53M485.60 152.53L488.84 141.80M488.69 153.37L491.92 142.64M491.77 154.21L495.01 143.48M494.86 155.05L496.37 150.08" stroke="#E6AA32"/>
<path d="M507.50 173.50L485.60 167.53M485.60 167.53L488.84 156.80M488.69 168.37L491.92 157.64M491.77 169.21L495.01 158.48M494.86 170.05L496.37 165.08" stroke="#E6AA32"/>
<path d="M507.50 188.50L485.14 184.61M485.14 184.61L487.35 173.63M488.29 185.16L490.50 174.18M491.44 185.71L493.66 174.72M494.59 186.26L495.63 181.16" stroke="#E6AA32"/>
<path d="M507.50 203.50L484.99 200.56M484.99 200.56L486.74 189.50M488.16 200.98L489.91 189.91M491.34 201.39L493.08 190.32M494.51 201.81L495.33 196.67" stroke="#006400"/>
<path d="M507.50 218.50L485.17 214.44M485.17 214.44L487.46 203.47M488.31 215.01L490.61 204.05M491.46 215.58L493.76 204.62" stroke="#006400"/>
<path d="M507.50 232.50L485.36 227.47M485.36 227.47L488.14 216.61M488.48 228.18L491.26 217.32M491.61 228.89L494.38 218.03" stroke="#E6AA32"/>
<path d="M507.50 248.50L486.07 241.00M486.07 241.00L490.06 230.53M489.09 242.06L493.08 231.59M492.12 243.12L496.10 232.64" stroke="#E6AA32"/>
<path d="M507.50 263.50L486.42 255.07M486.42 255.07L490.86 244.78M489.39 256.26L493.83 245.97M492.37 257.45L494.44 252.67" stroke="#E6AA32"/>
<path d="M507.50 277.50L485.87 270.62M485.87 270.62L489.55 260.04M488.92 271.59L492.60 261.01M491.97 272.56L493.69 267.65" stroke="#006400"/>
<path d="M507.50 293.50L486.42 285.07M486.42 285.07L490.86 274.78M489.39 286.26L493.83 275.97M492.37 287.45L494.44 282.67" stroke="#E6AA32"/>
<path d="M507.50 307.50L488.31 295.38M488.31 295.38L494.54 286.07M491.01 297.09L497.25 287.78M493.72 298.80L496.62 294.48" stroke="#006400"/>
<path d="M507.50 322.50L486.29 314.42M486.29 314.42L490.55 304.06M489.28 315.56L493.54 305.20" stroke="#006400"/>
<path d="M507.50 337.50L485.87 330.62M485.87 330.62L489.55 320.04M488.92 331.59L492.60 321.01" stroke="#006400"/>
<path d="M507.50 352.50L486.29 344.42M486.29 344.42L490.55 334.06M489.28 345.56L493.54 335.20" stroke="#006400"/>
<path d="M507.50 367.50L486.42 359.07M486.42 359.07L490.86 348.78M489.39 360.26L491.47 355.49" stroke="#006400"/>
<path d="M507.50 382.50L486.42 374.07M486.42 374.07L490.86 363.78M489.39 375.26L491.47 370.49" stroke="#006400"/>
<path d="M507.50 397.50L488.77 384.68M488.77 384.68L495.34 375.61" stroke="#006400"/>
<path d="M507.50 411.50L484.89 413.47M484.89 413.47L484.58 408.27" stroke="#006400"/>
<path d="M507.50 427.50L493.56 445.42M493.56 445.42L489.55 442.11" stroke="#E6AA32"/>
<path d="M507.50 441.50L516.44 462.36M516.44 462.36L506.03 466.50" stroke="#006400"/>
<path d="M507.50 456.50L518.44 476.39M518.44 476.39L508.48 481.52M516.90 473.59L512.27 475.96" stroke="#006400"/>
<path d="M554.50 69.50L534.20 59.35M534.20 59.35L539.47 49.46" stroke="#F00000"/>
<path d="M554.50 98.50L531.82 97.51M531.82 97.51L532.61 86.34M535.02 97.65L535.80 86.48M538.22 97.79L539.00 86.62M541.41 97.93L541.79 92.74" stroke="#E6AA32"/>
<path d="M554.50 114.50L532.36 109.47M532.36 109.47L535.14 98.61M535.48 110.18L538.26 99.32M538.61 110.89L541.38 100.03M541.73 111.60L544.50 100.74" stroke="#E6AA32"/>
<path d="M554.50 128.50L532.36 123.47M532.36 123.47L535.14 112.61M535.48 124.18L538.26 113.32M538.61 124.89L541.38 114.03M541.73 125.60L543.02 120.56" stroke="#E6AA32"/>
<path d="M554.50 143.50L532.87 136.62M532.87 136.62L536.55 126.04M535.92 137.59L539.60 127.01M538.97 138.56L542.65 127.98M542.02 139.53L545.70 128.95" stroke="#E6AA32"/>
<path d="M554.50 158.50L533.29 150.42M533.29 150.42L537.55 140.06M536.28 151.56L540.54 141.20M539.27 152.70L543.54 142.34M542.26 153.84L546.53 143.48M545.25 154.98L547.24 150.17" stroke="#E6AA32"/>
<path d="M554.50 173.50L532.36 168.47M532.36 168.47L535.14 157.61M535.48 169.18L538.26 158.32M538.61 169.89L541.38 159.03M541.73 170.60L544.50 159.74" stroke="#E6AA32"/>
<path d="M554.50 188.50L531.82 187.51M531.82 187.51L532.61 176.34M535.02 187.65L535.80 176.48M538.22 187.79L539.00 176.62M541.41 187.93L541.79 182.74" stroke="#E6AA32"/>
<path d="M554.50 203.50L531.82 202.51M531.82 202.51L532.61 191.34M535.02 202.65L535.80 191.48M538.22 202.79L539.00 191.62M541.41 202.93L541.79 197.74" stroke="#006400"/>
<path d="M554.50 218.50L532.17 214.44M532.17 214.44L534.46 203.47M535.31 215.01L537.61 204.05M538.46 215.58L540.76 204.62" stroke="#E6AA32"/>
<path d="M554.50 232.50L532.36 227.47M532.36 227.47L535.14 216.61M535.48 228.18L538.26 217.32M538.61 228.89L541.38 218.03" stroke="#E6AA32"/>
<path d="M554.50 248.50L532.96 241.32M532.96 241.32L536.79 230.79M536.00 242.33L539.83 231.80M539.04 243.35L542.86 232.82" stroke="#E6AA32"/>
<path d="M554.50 263.50L532.87 256.62M532.87 256.62L536.55 246.04M535.92 257.59L539.60 247.01M538.97 258.56L542.65 247.98" stroke="#006400"/>
<path d="M554.50 277.50L532.96 270.32M532.96 270.32L536.79 259.79M536.00 271.33L539.83 260.80M539.04 272.35L540.82 267.46" stroke="#E6AA32"/>
<path d="M554.50 293.50L535.13 281.66M535.13 281.66L541.23 272.26M537.86 283.33L543.96 273.93M540.59 285.00L543.43 280.64" stroke="#E6AA32"/>
<path d="M554.50 307.50L535.31 295.38M535.31 295.38L541.54 286.07M538.01 297.09L544.25 287.78M540.72 298.80L543.62 294.48" stroke="#006400"/>
<path d="M554.50 322.50L534.20 312.35M534.20 312.35L539.47 302.46M537.06 313.78L542.34 303.90M539.92 315.21L542.38 310.63" stroke="#006400"/>
<path d="M554.50 337.50L535.31 325.38M535.31 325.38L541.54 316.07M538.01 327.09L544.25 317.78" stroke="#006400"/>
<path d="M554.50 352.50L532.96 345.32M532.96 345.32L536.79 334.79M536.00 346.33L539.83 335.80" stroke="#006400"/>
<path d="M554.50 367.50L534.20 357.35M534.20 357.35L539.47 347.46M537.06 358.78L542.34 348.90" stroke="#006400"/>
<path d="M554.50 382.50L533.64 373.56M533.64 373.56L538.32 363.38M536.58 374.82L538.76 370.10" stroke="#006400"/>
<path d="M554.50 397.50L532.01 394.43M532.01 394.43L533.82 383.38" stroke="#E6AA32"/>
<path d="M554.50 411.50L532.20 415.75M532.20 415.75L530.40 404.69" stroke="#006400"/>
<path d="M554.50 427.50L540.56 445.42M540.56 445.42L536.55 442.11" stroke="#006400"/>
<path d="M554.50 441.50L563.09 462.51M563.09 462.51L552.62 466.47" stroke="#006400"/>
<path d="M554.50 456.50L565.44 476.39M565.44 476.39L555.48 481.52M563.90 473.59L559.27 475.96" stroke="#006400"/>
<path d="M602.50 69.50L584.23 82.97M584.23 82.97L581.26 78.69" stroke="#E6AA32"/>
<path d="M602.50 84.50L580.17 80.44M580.17 80.44L582.46 69.47M583.31 81.01L585.61 70.05M586.46 81.58L588.76 70.62M589.61 82.16L591.91 71.19" stroke="#E6AA32"/>
<path d="M602.50 98.50L581.64 89.56M581.64 89.56L586.32 79.38M584.58 90.82L589.26 80.64M587.52 92.08L592.21 81.90M590.46 93.34L595.15 83.16M593.40 94.60L595.59 89.88" stroke="#E6AA32"/>
<path d="M602.50 114.50L580.60 108.53M580.60 108.53L583.84 97.80M583.69 109.37L586.92 98.64M586.77 110.21L590.01 99.48M589.86 111.05L591.37 106.08" stroke="#E6AA32"/>
<path d="M602.50 128.50L580.60 122.53M580.60 122.53L583.84 111.80M583.69 123.37L586.92 112.64M586.77 124.21L590.01 113.48M589.86 125.05L593.10 114.33" stroke="#E6AA32"/>
<path d="M602.50 143.50L582.01 133.74M582.01 133.74L587.09 123.76M584.89 135.12L589.98 125.13M587.78 136.49L592.87 126.51M590.67 137.87L595.76 127.88M593.56 139.24L595.93 134.61" stroke="#F00000"/>
<path d="M602.50 158.50L580.87 151.62M580.87 151.62L584.55 141.04M583.92 152.59L587.60 142.01M586.97 153.56L590.65 142.98M590.02 154.53L593.70 143.95" stroke="#E6AA32"/>
<path d="M602.50 173.50L580.60 167.53M580.60 167.53L583.84 156.80M583.69 168.37L586.92 157.64M586.77 169.21L590.01 158.48M589.86 170.05L591.37 165.08" stroke="#006400"/>
<path d="M602.50 188.50L580.36 183.47M580.36 183.47L583.14 172.61M583.48 184.18L586.26 173.32M586.61 184.89L589.38 174.03M589.73 185.60L591.02 180.56" stroke="#E6AA32"/>
<path d="M602.50 203.50L580.17 199.44M580.17 199.44L582.46 188.47M583.31 200.01L585.61 189.05M586.46 200.58L588.76 189.62" stroke="#E6AA32"/>
<path d="M602.50 218.50L579.99 215.56M579.99 215.56L581.74 204.50M583.16 215.98L584.91 204.91M586.34 216.39L588.08 205.32" stroke="#006400"/>
<path d="M602.50 232.50L579.99 229.56M579.99 229.56L581.74 218.50M583.16 229.98L584.91 218.91M586.34 230.39L588.08 219.32" stroke="#E6AA32"/>
<path d="M602.50 248.50L580.60 242.53M580.60 242.53L583.84 231.80M583.69 243.37L586.92 232.64M586.77 244.21L590.01 233.48" stroke="#006400"/>
<path d="M602.50 263.50L580.60 257.53M580.60 257.53L583.84 246.80M583.69 258.37L586.92 247.64M586.77 259.21L588.29 254.23" stroke="#E6AA32"/>
<path d="M602.50 277.50L580.87 270.62M580.87 270.62L584.55 260.04M583.92 271.59L587.60 261.01M586.97 272.56L588.69 267.65" stroke="#006400"/>
<path d="M602.50 293.50L581.29 285.42M581.29 285.42L585.55 275.06M584.28 286.56L588.54 276.20M587.27 287.70L589.26 282.89" stroke="#E6AA32"/>
<path d="M602.50 307.50L581.64 298.56M581.64 298.56L586.32 288.38M584.58 299.82L589.26 289.64M587.52 301.08L589.70 296.36" stroke="#006400"/>
<path d="M602.50 322.50L581.80 313.18M581.80 313.18L586.67 303.09M584.72 314.50L589.59 304.41M587.64 315.81L589.91 311.13" stroke="#006400"/>
<path d="M602.50 337.50L581.64 328.56M581.64 328.56L586.32 318.38M584.58 329.82L589.26 319.64" stroke="#006400"/>
<path d="M602.50 352.50L581.64 343.56M581.64 343.56L586.32 333.38M584.58 344.82L589.26 334.64" stroke="#006400"/>
<path d="M602.50 367.50L580.87 360.62M580.87 360.62L584.55 350.04M583.92 361.59L587.60 351.01" stroke="#006400"/>
<path d="M602.50 382.50L581.64 373.56M581.64 373.56L586.32 363.38M584.58 374.82L589.26 364.64" stroke="#006400"/>
<path d="M602.50 397.50L583.61 384.91M583.61 384.91L590.07 375.76M586.28 386.68L592.74 377.53" stroke="#006400"/>
<path d="M602.50 411.50L579.99 408.56M579.99 408.56L581.74 397.50" stroke="#006400"/>
<path d="M602.50 427.50L586.45 443.55M586.45 443.55L582.88 439.77" stroke="#E6AA32"/>
<path d="M602.50 441.50L606.56 463.83M606.56 463.83L595.49 465.54" stroke="#E6AA32"/>
<path d="M602.50 456.50L613.44 476.39M613.44 476.39L603.48 481.52M611.90 473.59L607.27 475.96" stroke="#006400"/>
</svg>
<div class="rt" style="top:10px;letter-spacing:0.67px">NEXRAD LEVEL-III</div>
<div class="rt" style="top:25px;letter-spacing:0.54px">VAD WIND PROFILE</div>
<div class="rt" style="top:40px;letter-spacing:0.64px">KENX - ALBANY, NY</div>
<div class="rt" style="top:55px;letter-spacing:1.06px">05/22/2014 19:19:09 GMT</div>
<div class="rt" style="top:70px;letter-spacing:1.2px">LAT: 42/35/09 N</div>
<div class="rt" style="top:85px;letter-spacing:1.02px">LON: 74/03/50 W</div>
<div class="rt" style="top:100px;letter-spacing:0.66px">ELEV: 1934 FT</div>
<div class="rt" style="top:115px;letter-spacing:0.91px">MODE/VCP: A / 212</div>
<div class="rt" style="top:140px;letter-spacing:1.01px">MAX: 46 KT , 296 °</div>
<div class="rt" style="top:155px;letter-spacing:0.95px">ALT: 25000 FT</div>
<div class="rt" style="top:200px;left:692px;letter-spacing:0.89px">Legend: KT RMS (Category)</div>
<div class="sw" style="top:223px;background:#DC0064"></div>
<div class="sw" style="top:237px;background:#00A0E6"></div>
<div class="sw" style="top:251px;background:#F00000"></div>
<div class="sw" style="top:265px;background:#E6AA32"></div>
<div class="sw" style="top:279px;background:#006400;height:15px"></div>
<div class="rt" style="top:223px;left:742px;letter-spacing:1.32px">16  (5)</div>
<div class="rt" style="top:237px;left:742px;letter-spacing:1.32px">12  (4)</div>
<div class="rt" style="top:251px;left:742px;letter-spacing:1.4px">8  (3)</div>
<div class="rt" style="top:265px;left:742px;letter-spacing:1.4px">4  (2)</div>
<div class="rt" style="top:279px;left:742px;letter-spacing:1.4px">0  (1)</div>
</body></html>
